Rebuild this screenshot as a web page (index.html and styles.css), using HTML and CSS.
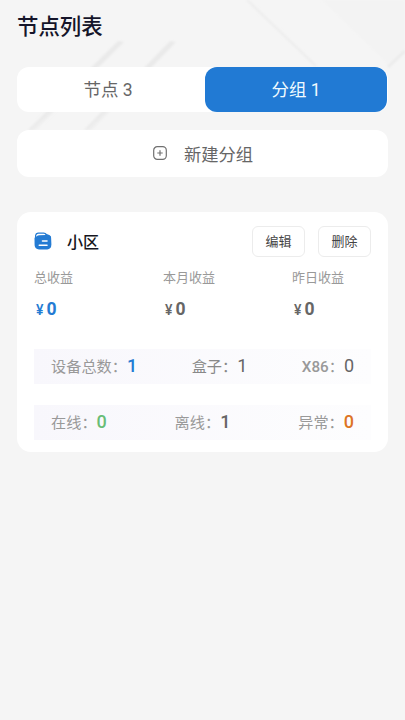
FILE: index.html
```html
<!DOCTYPE html>
<html lang="zh-CN">
<head>
<meta charset="utf-8">
<title>节点列表</title>
<link rel="stylesheet" href="styles.css">
</head>
<body>
<svg class="backdrop" viewBox="0 0 405 188" aria-hidden="true">
  <defs>
    <linearGradient id="fold" x1="0" y1="0" x2="1" y2="1">
      <stop offset="0" stop-color="#ededed" stop-opacity="0"/>
      <stop offset=".5" stop-color="#e9e9e9"/>
      <stop offset=".6" stop-color="#f5f5f5" stop-opacity="0"/>
    </linearGradient>
    <filter id="soft"><feGaussianBlur stdDeviation="1.3"/></filter>
  </defs>
  <g filter="url(#soft)">
    <path d="M322 0H405V52L388 64Z" fill="#f2f2f2" opacity=".7"/>
    <path d="M28 130L118 41L124 42L36 130Z" fill="url(#fold)"/>
    <path d="M84 130L170 41L176 42L92 130Z" fill="url(#fold)"/>
    <path d="M247 0L316 66" stroke="#ececec" stroke-width="2"/>
    <path d="M388 67L405 51" stroke="#ebebeb" stroke-width="3"/>
  </g>
</svg>
<main class="page">
  <h1 class="title">节点列表</h1>
  <nav class="tabs">
    <a class="tab">节点 3</a>
    <a class="tab tab-active">分组 1</a>
  </nav>
  <button class="create">
    <svg class="plus" viewBox="0 0 14 14"><rect x=".7" y=".7" width="12.6" height="12.6" rx="3.6"/><path d="M7 4.3V9.7M4.3 7H9.7"/></svg>
    <span>新建分组</span>
  </button>
  <section class="card">
    <header class="card-head">
      <svg class="group-icon" viewBox="0 0 18 18">
        <path d="M.5 6.2Q.6 4.9 2.1 4.8L15 3.5Q17 3.6 17.1 5.5L17.4 12.6Q17.3 17.2 13.2 17.4H5Q1 17.3.6 13.3Z" fill="#247bd3"/>
        <path d="M1 5.8V3.2Q1.4.5 4 .4H9.7Q11.9.4 12.7 2.1L15.2 2.9Q16.8 3.4 17 6Z" fill="#247bd3"/>
        <path d="M2.2 3.6Q2.7 1.8 4.4 1.7H9.6Q11 1.7 11.5 2.9L5 3.3Q3.2 3.6 2.2 4.7Z" fill="#fff"/>
        <path d="M8.5 9H13M5.3 13.2H13" stroke="#fff" stroke-width="1.6" stroke-linecap="round"/>
      </svg>
      <h2 class="name">小区</h2>
      <button class="action">编辑</button>
      <button class="action">删除</button>
    </header>
    <div class="income">
      <div><p class="label">总收益</p><p class="money blue"><small>¥</small>0</p></div>
      <div><p class="label">本月收益</p><p class="money"><small>¥</small>0</p></div>
      <div><p class="label">昨日收益</p><p class="money"><small>¥</small>0</p></div>
    </div>
    <div class="counts">
      <div><span>设备总数：</span><b class="blue">1</b></div>
      <div class="dark"><span>盒子：</span><b class="light">1</b></div>
      <div><span><span class="model">X86</span>：</span><b class="light">0</b></div>
    </div>
    <div class="counts">
      <div><span>在线：</span><b class="green">0</b></div>
      <div><span>离线：</span><b>1</b></div>
      <div><span>异常：</span><b class="orange">0</b></div>
    </div>
  </section>
</main>
</body>
</html>
```
FILE: styles.css
```css
* { box-sizing: border-box; }

body {
  margin: 0;
  min-height: 720px;
  background: #f5f5f5;
  color: #666;
  font-family: Roboto, "Noto Sans CJK SC", sans-serif;
}

h1, h2, p { margin: 0; }

button {
  padding: 0;
  border: 0;
  background: #fff;
  color: inherit;
  font: inherit;
}

.backdrop {
  position: absolute;
  top: 0;
  left: 0;
  width: 405px;
  height: 188px;
}

.page {
  position: relative;
  display: flex;
  flex-direction: column;
  padding: 11px 17px 0;
}

.title {
  height: 56px;
  color: #15152a;
  font-size: 21.4px;
  font-weight: 500;
  line-height: 31px;
}

.tabs {
  display: flex;
  height: 45px;
  border-radius: 12px;
  background: #fff;
  font-size: 17.5px;
}

.tab {
  display: flex;
  flex: 1;
  align-items: center;
  justify-content: center;
  padding: 0 6px 2px 0;
}

.tab-active {
  flex: 0 0 182px;
  margin-right: 1px;
  padding: 0 0 2px;
  border-radius: 12px;
  background: #217ad4;
  color: #f0faff;
}

.create {
  display: flex;
  align-items: center;
  justify-content: center;
  gap: 17px;
  height: 47px;
  margin: 18px 0 35px;
  border-radius: 12px;
  font-size: 17.3px;
}

.create span {
  margin-right: -1px;
  padding-bottom: 1px;
}

.plus {
  width: 14px;
  height: 14px;
  margin-bottom: 2px;
  fill: none;
  stroke: #707070;
  stroke-width: 1.2;
}

.card {
  height: 240px;
  padding: 13px 17px 0;
  border-radius: 14px;
  background: #fff;
}

.card-head {
  display: flex;
  align-items: center;
  height: 32px;
}

.group-icon {
  width: 18px;
  height: 18px;
}

.name {
  margin: 0 auto 0 15px;
  color: #151520;
  font-size: 16px;
  font-weight: 500;
}

.action {
  width: 53px;
  height: 31px;
  margin-left: 13px;
  padding-bottom: 2px;
  border: 1px solid #ececec;
  border-radius: 6px;
  color: #444;
  font-size: 13px;
}

.income {
  display: grid;
  grid-template-columns: 129px 129px 1fr;
  height: 92px;
  padding-top: 11px;
}

.label {
  color: #999;
  font-size: 13px;
  line-height: 20px;
}

.money {
  padding: 9px 0 0 2px;
  font-size: 17.5px;
  font-weight: 700;
  line-height: 24px;
}

.money small {
  margin-right: 3px;
  font-size: 14px;
  font-weight: 500;
}

.counts {
  display: flex;
  align-items: center;
  justify-content: space-between;
  height: 35px;
  margin-bottom: 21px;
  padding: 0 17px 2px;
  background: linear-gradient(90deg, #f8f7fc, #fdfdfe);
  color: #999;
  font-size: 15.2px;
}

.counts div {
  display: flex;
  align-items: center;
}

.counts div > span { padding-bottom: 2px; }

.counts b {
  color: #666;
  font-size: 18px;
  font-weight: 500;
}

.counts .dark { color: #888; }
.counts .light { font-weight: 400; }
.model { font-weight: 500; }
.blue, .counts .blue { color: #247bd3; }
.counts .green { color: #69bd76; }
.counts .orange { color: #dd7424; }
```
